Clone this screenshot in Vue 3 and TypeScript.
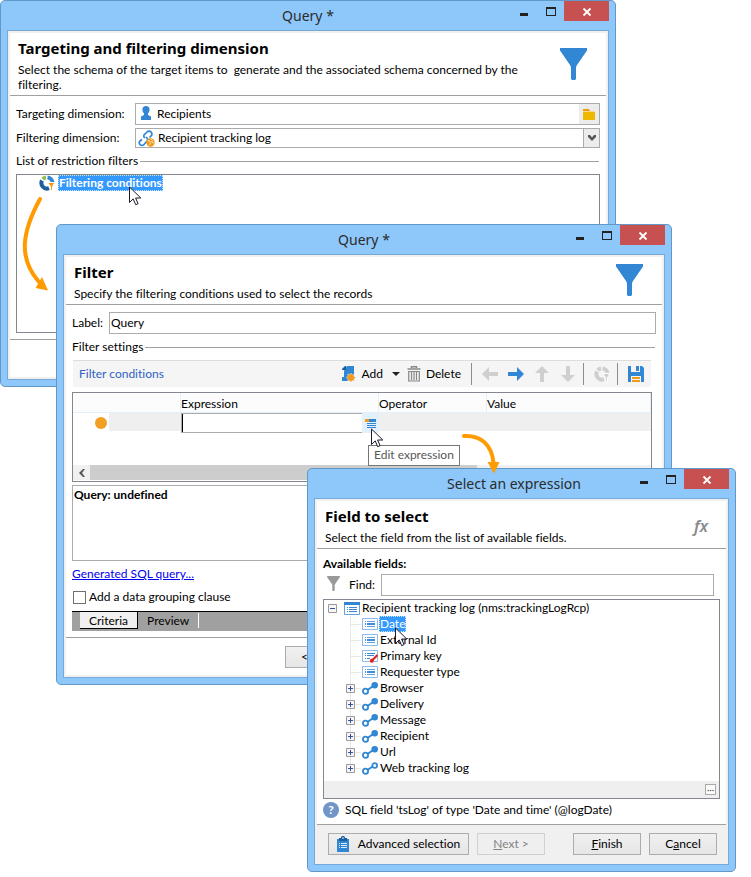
<script setup lang="ts">
import { ref } from 'vue'

interface Field {
  name: string
  kind: 'field' | 'key' | 'link' | 'links'
  expandable: boolean
}

const fields: Field[] = [
  { name: 'Date', kind: 'field', expandable: false },
  { name: 'External Id', kind: 'field', expandable: false },
  { name: 'Primary key', kind: 'key', expandable: false },
  { name: 'Requester type', kind: 'field', expandable: false },
  { name: 'Browser', kind: 'link', expandable: true },
  { name: 'Delivery', kind: 'link', expandable: true },
  { name: 'Message', kind: 'link', expandable: true },
  { name: 'Recipient', kind: 'link', expandable: true },
  { name: 'Url', kind: 'link', expandable: true },
  { name: 'Web tracking log', kind: 'links', expandable: true },
]

const selected = ref('Date')
const target = ref('Recipients')
const label = ref('Query')
const expression = ref('')
const find = ref('')
const grouping = ref(false)
</script>

<template>
  <svg class="defs" aria-hidden="true">
    <symbol id="app" viewBox="0 0 18 18">
      <circle cx="9" cy="9" r="7.700" fill="#fbfcf8" stroke="#8dbd45" stroke-width="1" />
      <path d="M4 8.500 8.500 5v8.500L4 11.500z" fill="#b9bbb9" />
      <path d="M5 8 8 6v2L6.500 11v2H5z" fill="#777" />
      <path d="M10.500 4v8.500H8V9.500h2.500M11.500 5v9" fill="none" stroke="#333" stroke-width="1.200" />
      <path d="M12.700 6v5.500l-2 1.500" fill="none" stroke="#999" />
    </symbol>
    <symbol id="funnel" viewBox="0 0 27 32">
      <path d="M0 0h27v2.500L17 17c-.7 1.200-1 2-1 3.500V31l-1 1h-3l-1-1V20.500c0-1.500-.3-2.300-1-3.500L0 2.500z" />
    </symbol>
    <symbol id="min" viewBox="0 0 27 20"><path d="M10 12h8v3h-8z" fill="#222" /></symbol>
    <symbol id="max" viewBox="0 0 27 20">
      <path d="M9 6h10v9H9zM10 8v6h8V8z" fill="#222" fill-rule="evenodd" />
    </symbol>
    <symbol id="close" viewBox="0 0 45 20">
      <path d="m19.500 7.500 7 7m0-7-7 7" stroke="#fff" stroke-width="1.800" />
    </symbol>
    <symbol id="cursor" viewBox="0 0 13 20">
      <path d="M.5 1v15.500l3.700-3.600 2.500 5.800 2.400-1-2.500-5.700h5.200z" fill="#fff" stroke="#1b1b2b" />
    </symbol>
    <symbol id="arrow" viewBox="0 0 16 16"><path d="M0 8l7-7v5h9v4H7v5z" /></symbol>
    <symbol id="wheel" viewBox="0 0 16 16">
      <path d="M7 2.500A5.600 5.600 0 0 0 3.800 4.200" class="w1" />
      <path d="M8.500 2.500A5.600 5.600 0 0 1 13.600 8" class="w2" />
      <path d="M3 5.500A5.600 5.600 0 0 0 10 13.200" class="w3" />
      <path d="M8.500 7.500H16l-2.500 4V16l-2-1.500v-3z" class="w4" />
    </symbol>
    <symbol id="field" viewBox="0 0 16 13">
      <path d="M.5.500h15v11H.5z" fill="#fff" stroke="#8cbce8" />
      <path d="M3 3h1v1H3zm2 0h8v1H5zM3 8h1v1H3zm2 0h8v1H5z" fill="#5f9fdc" />
      <path d="M3 5h1v2H3zm2 0h8v2H5z" fill="#3f8dd6" />
    </symbol>
  </svg>

  <main class="desktop">
    <section class="window targeting">
      <header class="bar">
        <svg class="app"><use href="#app" /></svg>
        <h1>Query *</h1>
        <div class="controls">
          <button aria-label="Minimize"><svg><use href="#min" /></svg></button>
          <button aria-label="Maximize"><svg><use href="#max" /></svg></button>
          <button class="close" aria-label="Close"><svg><use href="#close" /></svg></button>
        </div>
      </header>
      <div class="client">
        <div class="intro">
          <div>
            <h2>Targeting and filtering dimension</h2>
            <p>Select the schema of the target items to&nbsp; generate and the associated schema concerned by the filtering.</p>
          </div>
          <svg class="funnel"><use href="#funnel" /></svg>
        </div>
        <div class="body">
          <div class="row wide">
            <label for="target">Targeting dimension:</label>
            <div class="box tall">
              <svg class="person" viewBox="0 0 16 16">
                <path d="M8 1a3.600 3.600 0 0 1 3.600 3.600c0 1.700-.8 3-1.600 4V10l3 1.500V15H3v-3.500L6 10V8.600c-.8-1-1.600-2.300-1.600-4A3.600 3.600 0 0 1 8 1z" fill="#3187d3" />
              </svg>
              <input id="target" v-model="target" type="text" />
              <button class="folder" aria-label="Browse">
                <svg viewBox="0 0 12 11"><path d="M0 0h6v1h1v2H0z" fill="#ee9a12" /><path d="M0 2h12v2H0z" fill="#f8d98a" /><path d="M0 3h12v8H0z" fill="#eeb800" /></svg>
              </button>
            </div>
          </div>
          <div class="row wide second">
            <label for="filtering">Filtering dimension:</label>
            <div class="box">
              <svg class="chain" viewBox="0 0 17 17">
                <g fill="none" stroke="#3187d3" stroke-width="1.700">
                  <path d="m7 8-1-1a2.500 2.500 0 0 1 0-2l3-3a2.600 2.600 0 0 1 4 0 2.600 2.600 0 0 1 0 4l-1.500 1.500" />
                  <path d="m8 7 1 1a2.500 2.500 0 0 1 0 3l-3 3.500a2.600 2.600 0 0 1-4 0 2.600 2.600 0 0 1 0-3.500L4 9.500" />
                </g>
                <circle cx="12.500" cy="12.500" r="4.200" fill="#f09a1c" />
                <path d="m9.500 11 2-.5 1 2-1 2.500M13 9l1.500 1.500L13.500 12l2.500 1" fill="none" stroke="#ffe0a8" />
              </svg>
              <select id="filtering"><option>Recipient tracking log</option></select>
              <span class="drop"><svg viewBox="0 0 8 6"><path d="M0 0h2l2 2.500L6 0h2v2L4 6 0 2z" fill="#555" /></svg></span>
            </div>
          </div>
          <h3 class="group">List of restriction filters</h3>
          <div class="filters">
            <svg class="wheel"><use href="#wheel" /></svg>
            <span class="picked">Filtering conditions</span>
          </div>
        </div>
        <footer class="foot"></footer>
      </div>
    </section>

    <section class="window filter">
      <header class="bar">
        <svg class="app"><use href="#app" /></svg>
        <h1>Query *</h1>
        <div class="controls">
          <button aria-label="Minimize"><svg><use href="#min" /></svg></button>
          <button aria-label="Maximize"><svg><use href="#max" /></svg></button>
          <button class="close" aria-label="Close"><svg><use href="#close" /></svg></button>
        </div>
      </header>
      <div class="client">
        <div class="intro">
          <div>
            <h2>Filter</h2>
            <p>Specify the filtering conditions used to select the records</p>
          </div>
          <svg class="funnel"><use href="#funnel" /></svg>
        </div>
        <div class="body">
          <div class="row narrow">
            <label for="label">Label:</label>
            <div class="box tall"><input id="label" v-model="label" type="text" /></div>
          </div>
          <h3 class="group">Filter settings</h3>
          <div class="toolbar">
            <span class="caption">Filter conditions</span>
            <button class="add">
              <svg viewBox="0 0 14 16">
                <path d="M5 0h7v9l-2 3-3 3H0v-4h2V5z" fill="#3187d3" /><path d="M0 4V3l3-3h1v4z" fill="#1c5f9f" />
                <path d="m9 7 1.200 1.700 2-.5-.4 2L13.700 11.500 12 12.800l.3 2.100-2.100-.4L9 16l-1.300-1.500-2 .4.300-2.100-1.700-1.300L6.100 10l-.4-2 2 .6z" fill="#f09a1c" stroke="#f7e7cd" stroke-width=".5" />
              </svg>Add<i class="caret"></i>
            </button>
            <button class="delete">
              <svg viewBox="0 0 14 16">
                <path d="M4.500 2V.7h5V2M.500 3h13" fill="none" stroke="#888" stroke-width="1.500" />
                <path d="M1.700 5.500h10.600V15H1.700zM4.500 6v8M7 6v8M9.500 6v8" fill="none" stroke="#888" stroke-width="1.200" />
              </svg>Delete
            </button>
            <i class="sep"></i>
            <div class="moves">
              <button aria-label="Move left"><svg class="off"><use href="#arrow" /></svg></button>
              <button aria-label="Move right"><svg class="on right"><use href="#arrow" /></svg></button>
              <button aria-label="Move up"><svg class="off up"><use href="#arrow" /></svg></button>
              <button aria-label="Move down"><svg class="off down"><use href="#arrow" /></svg></button>
            </div>
            <i class="sep"></i>
            <button aria-label="Target"><svg class="wheel gray"><use href="#wheel" /></svg></button>
            <i class="sep"></i>
            <button aria-label="Save">
              <svg viewBox="0 0 16 16">
                <path d="M0 0h14l2 2v14H0z" fill="#3187d3" /><path d="M3 0h9v6H3zM3 10h10v6H3z" fill="#f5f5f5" />
                <path d="M8 0h3v5H8z" fill="#3187d3" /><path d="M4 11h8v2H4zM4 14h8v2H4z" fill="#f09a1c" />
              </svg>
            </button>
          </div>
          <div class="grid">
            <table>
              <thead>
                <tr><th class="c1"></th><th class="c2">Expression</th><th class="c3">Operator</th><th>Value</th></tr>
              </thead>
              <tbody>
                <tr>
                  <td class="mark"><i class="dot"></i></td>
                  <td>
                    <div class="edit">
                      <input v-model="expression" type="text" aria-label="Expression" />
                      <i class="text-caret"></i>
                      <button aria-label="Edit expression">
                        <svg viewBox="0 0 12 11"><path d="M4 1h7v3H4zM2 5h9v1H2zM2 7h9v1H2zM2 9h9v1H2z" fill="#3187d3" /><path d="M0 1h4v3H0z" fill="#f09a1c" /></svg>
                      </button>
                    </div>
                  </td>
                  <td class="fill"></td>
                  <td class="fill"></td>
                </tr>
              </tbody>
            </table>
            <div class="scroll">
              <button aria-label="Scroll left"><svg viewBox="0 0 6 8"><path d="M4 0h2L3 4l3 4H4L0 4z" fill="#555" /></svg></button>
              <i class="thumb"></i>
            </div>
          </div>
          <div class="result">Query: undefined</div>
          <a class="sql" href="#sql">Generated SQL query...</a>
          <label class="check"><input v-model="grouping" type="checkbox" />Add a data grouping clause</label>
          <div class="tabs">
            <button class="current">Criteria</button>
            <button>Preview</button>
          </div>
        </div>
        <footer class="foot back"><button class="push">&lt;</button></footer>
      </div>
    </section>

    <section class="window expression">
      <header class="bar">
        <svg class="app"><use href="#app" /></svg>
        <h1>Select an expression</h1>
        <div class="controls">
          <button aria-label="Minimize"><svg><use href="#min" /></svg></button>
          <button aria-label="Maximize"><svg><use href="#max" /></svg></button>
          <button class="close" aria-label="Close"><svg><use href="#close" /></svg></button>
        </div>
      </header>
      <div class="client">
        <div class="intro">
          <div>
            <h2>Field to select</h2>
            <p>Select the field from the list of available fields.</p>
          </div>
          <span class="fx">fx</span>
        </div>
        <div class="body">
          <h3 class="available">Available fields:</h3>
          <div class="row find">
            <svg class="small-funnel"><use href="#funnel" /></svg>
            <label for="find">Find:</label>
            <div class="box tall"><input id="find" v-model="find" type="text" /></div>
          </div>
          <div class="tree">
            <div class="node">
              <svg class="toggle" viewBox="0 0 9 9"><path d="M.5.500h8v8h-8z" fill="#f6f6f6" stroke="#999" /><path d="M2 4h5v1H2z" fill="#3a4f9e" /></svg>
              <svg class="icon" viewBox="0 0 16 13"><path d="M.5.500h15v12H.5z" fill="#fff" stroke="#5ea3e0" /><path d="M0 0h16v3H0z" fill="#3187d3" /><path d="M3 5h1v1H3zm2 0h8v1H5zM3 7h1v1H3zm2 0h8v1H5zM3 9h1v1H3zm2 0h8v1H5z" fill="#3987d0" /></svg>
              <span>Recipient tracking log (nms:trackingLogRcp)</span>
            </div>
            <ul>
              <li v-for="field in fields" :key="field.name" class="node" @click="selected = field.name">
                <svg v-if="field.expandable" class="toggle" viewBox="0 0 9 9"><path d="M.5.500h8v8h-8z" fill="#f6f6f6" stroke="#999" /><path d="M2 4h5v1H2zM4 2h1v5H4z" fill="#3a4f9e" /></svg>
                <i v-else class="toggle"></i>
                <svg v-if="field.kind === 'field'" class="icon"><use href="#field" /></svg>
                <svg v-else-if="field.kind === 'key'" class="icon" viewBox="0 0 16 13">
                  <path d="M.5.500h15v11H.5z" fill="#fff" stroke="#8cbce8" />
                  <path d="M3 3h1v1H3zm2 0h8v1H5zM3 5h1v1H3zm2 0h7v1H5zM3 8h1v1H3zm2 0h3v1H5z" fill="#3987d0" />
                  <path d="m15.500 5-6 6" stroke="#e02020" stroke-width="2.200" /><circle cx="9.800" cy="10.700" r="2" fill="#e02020" />
                </svg>
                <svg v-else class="icon" viewBox="0 0 16 13">
                  <path d="m4 9 8-5.500" stroke="#3187d3" stroke-width="2" />
                  <circle cx="3.500" cy="9.200" r="2.600" fill="#fff" stroke="#3187d3" stroke-width="1.800" />
                  <circle v-if="field.kind === 'link'" cx="12.700" cy="3.300" r="3.300" fill="#3187d3" />
                  <circle v-else cx="12.700" cy="3.500" r="2.400" fill="#fff" stroke="#3187d3" stroke-width="1.700" />
                </svg>
                <span :class="{ chosen: selected === field.name }">{{ field.name }}</span>
              </li>
            </ul>
            <div class="status"><button aria-label="More">···</button></div>
          </div>
          <div class="hint"><span class="help">?</span>SQL field 'tsLog' of type 'Date and time' (@logDate)</div>
        </div>
        <footer class="foot actions">
          <button class="push advanced">
            <svg viewBox="0 0 12 16"><path d="M0 3h12v13H0z" fill="#3187d3" /><path d="M2 2h2c0-1.500.8-2 2-2s2 .5 2 2h2v3H2z" fill="#1c5f9f" /><circle cx="6" cy="2" r=".8" fill="#fff" /><path d="M2 7h1v1H2zm2 0h6v1H4zM2 9h1v1H2zm2 0h6v1H4zM2 11h1v1H2zm2 0h6v1H4z" fill="#dcebf8" /></svg>Advanced selection
          </button>
          <button class="push" disabled><span><u>N</u>ext &gt;</span></button>
          <button class="push finish"><span><u>F</u>inish</span></button>
          <button class="push"><span>C<u>a</u>ncel</span></button>
        </footer>
      </div>
    </section>

    <div class="tip" role="tooltip">Edit expression</div>
    <svg class="cursor at-conditions"><use href="#cursor" /></svg>
    <svg class="cursor at-edit"><use href="#cursor" /></svg>
    <svg class="cursor at-date"><use href="#cursor" /></svg>
    <svg class="flow first" viewBox="0 0 40 100">
      <path d="M20 5C2 38-2 64 19 88" fill="none" stroke="#ff9a00" stroke-width="4" stroke-linecap="round" />
      <path d="m22 83 6 13.500L15.500 94z" fill="#ff9a00" />
    </svg>
    <svg class="flow next" viewBox="0 0 42 44">
      <path d="M4 6c17-1 28 9 29.500 27" fill="none" stroke="#ff9a00" stroke-width="4" stroke-linecap="round" />
      <path d="M27.500 32h12L34 43.500z" fill="#ff9a00" />
    </svg>
  </main>
</template>

<style>
body { margin: 0; background: #fff; }
</style>

<style scoped>
.defs { position: absolute; width: 0; height: 0; }
.desktop {
  position: relative; display: grid; align-items: start; padding-bottom: 5px;
  font: 12px/16px Lato, "Noto Sans", sans-serif; font-variant-ligatures: none; color: #000;
}
h1, h2, h3, p, ul { margin: 0; padding: 0; font-size: 12px; font-weight: 400; }
button, input, select { font: inherit; font-variant-ligatures: none; color: inherit; margin: 0; padding: 0; border: 0; background: none; border-radius: 0; outline: 0; }
label { white-space: nowrap; }
svg { display: block; flex: none; }
i { display: block; }

.window {
  grid-area: 1 / 1; min-width: 0; padding: 0 6px 6px; background: #8ec8fb;
  border: 1px solid #6298c8; border-radius: 5px;
}
.targeting { margin: 0 135px 0 0; }
.filter { margin: 224px 79px 0 56px; }
.expression { margin: 468px 15px 0 307px; }

.bar { display: grid; grid-template-columns: 1fr auto 1fr; height: 29px; align-items: start; }
.app { width: 18px; height: 18px; margin: 5px 0 0 2px; }
.bar h1 { font-family: "Noto Sans", sans-serif; font-size: 14px; line-height: 20px; margin-top: 5px; color: #2b2b2b; }
.expression h1 { margin-right: 15px; }
.controls { display: flex; justify-content: flex-end; }
.controls svg { width: 27px; height: 20px; }
.controls .close { background: #c75050; }
.controls .close svg { width: 45px; }

.client { border: 1px solid #75a9da; background: #fff; box-shadow: inset 0 0 0 2px #f0f0f0; padding: 2px; }
.intro { display: flex; justify-content: space-between; padding: 6px 18px 3px 8px; border-bottom: 1px solid #a0a0a0; }
.intro > div { flex: 1; min-width: 0; }
.intro h2 { font-family: "Noto Sans", sans-serif; font-size: 15px; line-height: 18px; font-weight: 700; margin-bottom: 5px; }
.intro p { line-height: 15px; }
.funnel { width: 27px; height: 32px; fill: #3187d3; margin: 9px 1px 0 0; }
.filter .funnel { margin: 1px 1px -8px 0; }
.targeting .intro p { padding-right: 32px; }
.fx { align-self: center; font: italic 600 16px/16px "Noto Sans", sans-serif; color: #8a8a8a; }
.body { display: flex; flex-direction: column; padding: 7px 6px 6px; border-bottom: 1px solid #a0a0a0; }

.row { display: grid; align-items: center; }
.wide { grid-template-columns: 119px 1fr; }
.narrow { grid-template-columns: 37px 1fr; }
.second { margin-top: 3px; }
.box { display: flex; align-items: stretch; box-sizing: border-box; height: 20px; border: 1px solid #ababab; background: #fff; min-width: 0; }
.tall { height: 22px; }
.box input, .box select { flex: 1; min-width: 0; padding: 0 1px; appearance: none; }
.person { width: 16px; height: 16px; margin: 1px 2px 0; }
.chain { width: 17px; height: 17px; margin: 1px 2px 0; }
.folder { width: 20px; background: #ececec; display: grid; place-items: center; }
.folder svg { width: 12px; height: 11px; }
.drop { width: 15px; border-left: 1px solid #ababab; background: #ececec; display: grid; place-items: center; }
.drop svg { width: 8px; height: 6px; }
.group { display: flex; align-items: center; gap: 2px; margin: 5px 0; }
.group::after { content: ""; flex: 1; height: 1px; background: #a0a0a0; margin-right: 1px; }
.filters { display: flex; gap: 3px; align-items: flex-start; box-sizing: border-box; min-height: 159px; border: 1px solid #828790; padding-left: 22px; }
.wheel { width: 16px; height: 16px; fill: none; stroke-width: 4; --a: #8bc34a; --b: #3187d3; --c: #1c5f9f; --d: #f09a1c; }
.gray { --a: #cfcfcf; --b: #cfcfcf; --c: #cfcfcf; --d: #cfcfcf; }
.w1 { stroke: var(--a); }
.w2 { stroke: var(--b); }
.w3 { stroke: var(--c); }
.w4 { fill: var(--d); stroke: #fff; stroke-width: 1; }
.picked { background: #3399ff; color: #fff; font-weight: 700; line-height: 14px; border: 1px dotted #cfe6ff; }

.foot { box-sizing: border-box; height: 37px; padding: 8px 9px 7px 11px; display: flex; }
.back { padding-left: 219px; }
.push {
  box-sizing: border-box; width: 68px; height: 22px; border: 1px solid #acacac;
  background: linear-gradient(#f0f0f0, #e6e6e6); display: flex; align-items: center; justify-content: center;
}
.back .push { justify-content: flex-start; padding-left: 15px; }
.actions { background: #f0f0f0; gap: 8px; }
.advanced { width: 141px; gap: 9px; white-space: nowrap; }
.advanced svg { width: 12px; height: 16px; }
.finish { margin-left: auto; }
.push:disabled { color: #838383; border-color: #d0d0d0; background: #efefef; }

.toolbar { display: flex; align-items: center; box-sizing: border-box; height: 27px; margin: 0 5px 5px 1px; padding: 0 7px 0 6px; background: #f5f5f5; border-top: 1px solid #dcdcdc; }
.caption { color: #2f5fc4; margin-right: auto; }
.toolbar button { display: flex; align-items: center; }
.toolbar button svg { width: 16px; height: 16px; }
.toolbar .add svg, .toolbar .delete svg { width: 14px; margin-right: 5px; }
.caret { border: 4px solid transparent; border-top-color: #222; border-bottom: 0; margin: 0 7px 0 9px; }
.sep { width: 1px; height: 22px; background: #8c8c8c; margin: 0 10px 0 7px; }
.delete + .sep { margin-left: 10px; }
.moves { display: flex; gap: 10px; }
.off { fill: #cfcfcf; }
.on { fill: #3187d3; }
.right { transform: rotate(180deg); }
.up { transform: rotate(90deg); }
.down { transform: rotate(270deg); }

.grid { border: 1px solid #828790; margin-right: 4px; }
table { width: 100%; table-layout: fixed; border-collapse: collapse; }
th, td { padding: 0; text-align: left; font-weight: 400; height: 20px; }
th { background: #fcfcfc; box-shadow: inset -1px -1px #e3effb; padding-top: 2px; height: 18px; }
.c1 { width: 108px; }
.c2 { width: 198px; }
.c3 { width: 108px; }
.fill { background: linear-gradient(#efefef, #efefef) 0 0 / 100% 18px no-repeat; }
.mark { background: linear-gradient(#efefef, #efefef) 36px 0 / 100% 18px no-repeat; }
.dot { width: 12px; height: 12px; border-radius: 50%; background: #f29f23; margin: 0 0 1px 22px; }
.edit { position: relative; display: flex; height: 20px; }
.edit input { flex: 1; min-width: 0; box-sizing: border-box; border: 1px solid #ababab; border-right: 0; background: #fff; }
.edit button { width: 17px; background: #e2f0fc; display: grid; place-items: center; }
.edit svg { width: 12px; height: 11px; }
.text-caret { position: absolute; left: 1px; top: 1px; bottom: 1px; width: 1px; background: #000; }
.scroll { display: flex; height: 15px; margin-top: 32px; border-bottom: 1px solid #fff; background: #f0f0f0; }
.scroll button { width: 17px; display: grid; place-items: center; }
.scroll svg { width: 6px; height: 8px; }
.thumb { width: 67%; background: #cdcdcd; }
.result { box-sizing: border-box; min-height: 76px; margin: 3px 4px 5px 0; padding: 1px; border: 1px solid #ababab; font-weight: 700; }
.sql { color: #0000f0; align-self: flex-start; }
.check { display: flex; align-items: center; gap: 3px; margin: 7px 0 6px 1px; }
.check input { appearance: none; box-sizing: border-box; width: 13px; height: 13px; border: 1px solid #707070; background: #fff; }
.check input:checked { background: #3187d3; }
.tabs { display: flex; align-items: flex-start; box-sizing: border-box; height: 20px; margin-right: 4px; padding-left: 8px; background: #a0a0a0; border-top: 1px solid #000; }
.tabs button { height: 15px; padding: 0 9px; border-right: 1px solid #fff; margin-top: 1px; line-height: 15px; }
.tabs .current { height: 17px; margin: 0; background: #f0f0f0; border-right: 1px solid #000; border-bottom: 1px solid #000; }

.available { font-weight: 700; margin-bottom: 2px; }
.find { grid-template-columns: 26px 32px 1fr; margin-right: 6px; }
.small-funnel { width: 13px; height: 15px; fill: #999; margin: -3px 0 0 4px; }
.tree { border: 1px solid #828790; margin-top: 3px; }
.node { display: flex; align-items: center; height: 16px; padding-left: 4px; white-space: nowrap; list-style: none; }
.toggle { width: 9px; height: 9px; margin-right: 7px; flex: none; }
.icon { width: 16px; height: 13px; margin-right: 2px; }
.tree ul { background: linear-gradient(#e8e8e8, #e8e8e8) 26px 0 / 1px 152px no-repeat; }
.tree li { padding-left: 22px; background: linear-gradient(#e8e8e8, #e8e8e8) 27px 8px / 10px 1px no-repeat; cursor: default; }
.chosen { background: #3399ff; color: #fff; line-height: 14px; border: 1px dotted #cfe6ff; margin-left: -1px; }
.status { display: flex; justify-content: flex-end; align-items: center; height: 17px; margin-top: 5px; padding-right: 3px; background: #efefef; }
.status button { box-sizing: border-box; width: 11px; height: 11px; border: 1px solid #aaa; background: #fafafa; font-size: 9px; line-height: 8px; color: #555; display: grid; place-items: center; }
.hint { display: flex; align-items: center; gap: 6px; margin-top: 3px; white-space: nowrap; }
.help { width: 16px; height: 16px; border-radius: 50%; background: #7295c8; color: #fff; font-weight: 700; text-align: center; }

.tip { position: absolute; left: 368px; top: 445px; padding: 1px 5px 2px; border: 1px solid #767676; background: #fff; color: #575757; white-space: nowrap; }
.cursor { position: absolute; width: 13px; height: 20px; pointer-events: none; }
.at-conditions { left: 129px; top: 186px; }
.at-edit { left: 371px; top: 428px; }
.at-date { left: 395px; top: 627px; }
.flow { position: absolute; pointer-events: none; }
.first { left: 20px; top: 194px; width: 40px; height: 100px; }
.next { left: 460px; top: 430px; width: 42px; height: 44px; }
</style>
